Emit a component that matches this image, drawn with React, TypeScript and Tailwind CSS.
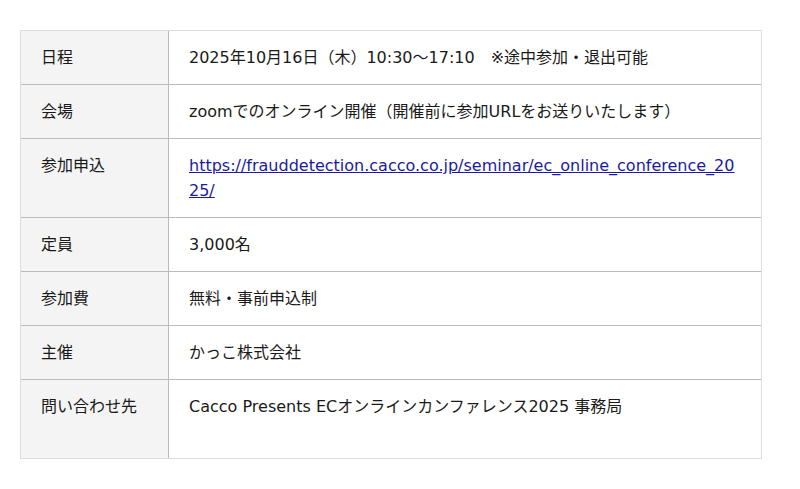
const rows: { label: string; value: React.ReactNode; tall?: boolean }[] = [
  { label: "日程", value: "2025年10月16日（木）10:30〜17:10　※途中参加・退出可能" },
  { label: "会場", value: "zoomでのオンライン開催（開催前に参加URLをお送りいたします）" },
  {
    label: "参加申込",
    value: (
      <a
        href="https://frauddetection.cacco.co.jp/seminar/ec_online_conference_2025/"
        className="break-all text-[#1a1aa6] underline"
      >
        https://frauddetection.cacco.co.jp/seminar/ec_online_conference_2025/
      </a>
    ),
  },
  { label: "定員", value: "3,000名" },
  { label: "参加費", value: "無料・事前申込制" },
  { label: "主催", value: "かっこ株式会社" },
  { label: "問い合わせ先", value: "Cacco Presents ECオンラインカンファレンス2025 事務局", tall: true },
];

export default function App() {
  return (
    <div className="min-h-screen bg-white pl-[20px] pt-[30px] font-['DejaVu_Sans','Noto_Sans_CJK_JP',sans-serif] text-[16px] leading-[25px] text-[#1a1a1a]">
      <div className="w-[742px] border border-[#dddddd]">
        {rows.map((row, i) => (
          <div
            key={row.label}
            className={`grid grid-cols-[148px_1fr] ${i < rows.length - 1 ? "border-b border-[#bbbbbb]" : ""}`}
          >
            <div className="border-r border-[#bbbbbb] bg-[#f4f4f4] px-[20px] py-[14px]">{row.label}</div>
            <div className={`px-[20px] py-[14px] ${row.tall ? "min-h-[78px]" : ""}`}>{row.value}</div>
          </div>
        ))}
      </div>
    </div>
  );
}
